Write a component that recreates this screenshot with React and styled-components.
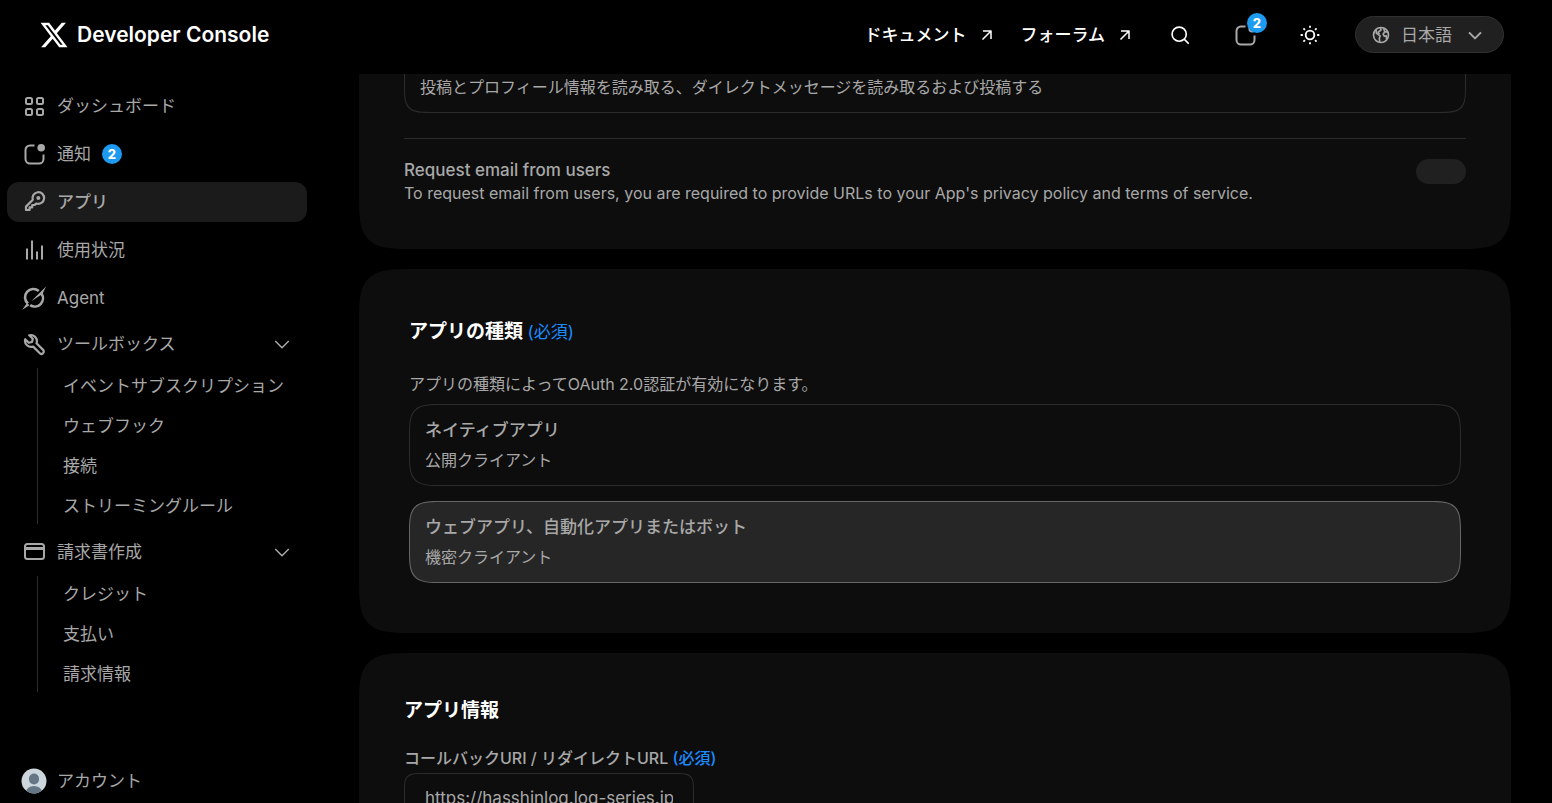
import React, { useState } from "react";
import styled, { createGlobalStyle } from "styled-components";

const navItems = [
  { id: "dashboard", label: "ダッシュボード" },
  { id: "notifications", label: "通知", count: 2 },
  { id: "apps", label: "アプリ" },
  { id: "usage", label: "使用状況" },
  { id: "agent", label: "Agent" },
];

const navGroups = [
  {
    id: "toolbox",
    label: "ツールボックス",
    items: ["イベントサブスクリプション", "ウェブフック", "接続", "ストリーミングルール"],
  },
  {
    id: "billing",
    label: "請求書作成",
    items: ["クレジット", "支払い", "請求情報"],
  },
];

const appTypes = [
  { id: "native", title: "ネイティブアプリ", text: "公開クライアント" },
  { id: "web", title: "ウェブアプリ、自動化アプリまたはボット", text: "機密クライアント" },
];

const Stroke = ({ size = 24, width = 2, children }) => (
  <svg
    width={size}
    height={size}
    viewBox="0 0 24 24"
    fill="none"
    stroke="currentColor"
    strokeWidth={width}
    strokeLinejoin="round"
    aria-hidden="true"
  >
    {children}
  </svg>
);

const NotificationIcon = ({ size }) => (
  <Stroke size={size}>
    <path d="M12.500 3.500H8A4.500 4.500 0 0 0 3.500 8v9A4.500 4.500 0 0 0 8 21.500h9a4.500 4.500 0 0 0 4.500-4.500v-4.500" />
    <circle cx="19.200" cy="5.800" r="3.800" fill="currentColor" stroke="none" />
  </Stroke>
);

const Chevron = ({ size = 18, width = 2 }) => (
  <Stroke size={size} width={width}>
    <path d="M3 8l9 9 9-9" />
  </Stroke>
);

const ArrowOut = () => (
  <Stroke size={12} width={3}>
    <path d="M4 4h16v16M20 4L3 21" />
  </Stroke>
);

const icons = {
  dashboard: (
    <Stroke>
      <rect x="4" y="4" width="6" height="6" rx="1.500" />
      <rect x="15" y="4" width="6" height="6" rx="1.500" />
      <rect x="4" y="15" width="6" height="6" rx="1.500" />
      <rect x="15" y="15" width="6" height="6" rx="1.500" />
    </Stroke>
  ),
  notifications: <NotificationIcon />,
  apps: (
    <Stroke width={2.2}>
      <path d="M10.800 9.800L4 16.600V20h3.600v-2.600h2.600v-2.400h2.300l2-1.500a5.800 5.800 0 1 0-3.700-3.700z" />
      <circle cx="16.300" cy="8" r="2" fill="currentColor" stroke="none" />
    </Stroke>
  ),
  usage: (
    <Stroke>
      <path d="M5 10.500v11M10 2.500v19M15 13.500v8M20 7.500v14" />
    </Stroke>
  ),
  agent: (
    <Stroke width={2.6}>
      <path d="M5.900 17.600A8.200 8.200 0 0 1 16.800 5" />
      <path d="M19.400 7.600A8.200 8.200 0 0 1 8.200 19.200" />
      <path d="M24 0.500L9.200 15.200 20.500 8zM5 17L7.500 19.200 0.200 23.800z" fill="currentColor" stroke="none" />
    </Stroke>
  ),
  toolbox: (
    <Stroke width={2.2}>
      <path d="M7.200 3.200l3.600 3.600-0.800 3.200-3.200 0.800-3.600-3.600a6.200 6.200 0 0 0 8 7.400l6.600 6.600a2.300 2.300 0 0 0 3.300-3.300L14.500 11.300A6.200 6.200 0 0 0 7.200 3.200z" />
    </Stroke>
  ),
  billing: (
    <Stroke>
      <rect x="3" y="4" width="19" height="15" rx="2.500" />
      <path d="M3 8.500h19" strokeWidth="3" />
    </Stroke>
  ),
};

const App = () => {
  const [appType, setAppType] = useState("web");
  const [callback, setCallback] = useState("https://hasshinlog.log-series.jp");

  return (
    <>
      <GlobalStyle />
      <Page>
        <Header>
          <Brand href="#">
            <svg width="30" height="30" viewBox="0 0 24 24" fill="currentColor" aria-hidden="true">
              <path d="M18.244 2.250h3.308l-7.227 8.260 8.502 11.240H16.170l-5.214-6.817L4.990 21.750H1.680l7.730-8.835L1.254 2.250H8.080l4.713 6.231zm-1.161 17.520h1.833L7.084 4.126H5.117z" />
            </svg>
            Developer Console
          </Brand>
          <HeaderActions>
            <HeaderLinks>
              <HeaderLink href="#docs">
                ドキュメント
                <ArrowOut />
              </HeaderLink>
              <HeaderLink href="#forum">
                フォーラム
                <ArrowOut />
              </HeaderLink>
            </HeaderLinks>
            <IconButton type="button" aria-label="検索">
              <Stroke size={20}>
                <circle cx="11" cy="11" r="8.500" />
                <path d="M17 17l5.500 5.500" />
              </Stroke>
            </IconButton>
            <IconButton type="button" aria-label="通知" $dim>
              <NotificationIcon size={24} />
              <CornerBadge>2</CornerBadge>
            </IconButton>
            <IconButton type="button" aria-label="テーマ">
              <Stroke size={22}>
                <circle cx="12" cy="12" r="4.700" />
                <path
                  d="M12 1.800v2.400M12 19.800v2.400M1.800 12h2.400M19.800 12h2.400M4.800 4.800l1.700 1.700M17.500 17.500l1.700 1.700M4.800 19.200l1.700-1.700M17.500 6.500l1.700-1.700"
                />
              </Stroke>
            </IconButton>
            <LanguageButton type="button">
              <Stroke size={20}>
                <circle cx="12" cy="12" r="9" />
                <path d="M6 5.500l0.500 4.500 4.500 3-1 3 0.500 4.500M11.500 3.500l0.500 2.500-3.500 2.500 1.500 2.500M20 8.500l-3.500-0.500-2 3 1.500 2.500 2.500-0.500 0 4.500M15 3.500l1.500 4.500" />
              </Stroke>
              <span>日本語</span>
              <Chevron size={16} width={3} />
            </LanguageButton>
          </HeaderActions>
        </Header>

        <Body>
          <Sidebar>
            <NavList>
              {navItems.map((item) => (
                <li key={item.id}>
                  <NavLink href={`#${item.id}`} $active={item.id === "apps"}>
                    {icons[item.id]}
                    {item.label}
                    {item.count && <Badge>{item.count}</Badge>}
                  </NavLink>
                </li>
              ))}
            </NavList>
            <Groups>
              {navGroups.map((group) => (
                <div key={group.id}>
                  <GroupButton type="button" aria-expanded="true">
                    {icons[group.id]}
                    <span>{group.label}</span>
                    <Chevron />
                  </GroupButton>
                  <SubList>
                    {group.items.map((label) => (
                      <li key={label}>
                        <SubLink href="#">{label}</SubLink>
                      </li>
                    ))}
                  </SubList>
                </div>
              ))}
            </Groups>
            <Account href="#account">
              <svg width="26" height="26" viewBox="0 0 26 26" aria-hidden="true">
                <clipPath id="avatar">
                  <circle cx="13" cy="13" r="12.500" />
                </clipPath>
                <g clipPath="url(#avatar)">
                  <rect width="26" height="26" fill="#ccd6dd" />
                  <rect x="8" y="5.500" width="10" height="11" rx="5" fill="#657786" />
                  <ellipse cx="13" cy="24" rx="8" ry="6" fill="#657786" />
                </g>
              </svg>
              アカウント
            </Account>
          </Sidebar>

          <Main>
            <Card $continued>
              <PermissionText>
                投稿とプロフィール情報を読み取る、ダイレクトメッセージを読み取るおよび投稿する
              </PermissionText>
              <Divider />
              <SwitchRow>
                <div>
                  <SwitchLabel htmlFor="request-email">Request email from users</SwitchLabel>
                  <Text>
                    To request email from users, you are required to provide URLs to your App's privacy policy and
                    terms of service.
                  </Text>
                </div>
                <Switch id="request-email" type="checkbox" role="switch" disabled />
              </SwitchRow>
            </Card>

            <Card $inset>
              <Title>
                アプリの種類 <Required>(必須)</Required>
              </Title>
              <Intro>アプリの種類によってOAuth 2.0認証が有効になります。</Intro>
              <Options>
                {appTypes.map((type) => (
                  <Option key={type.id} $selected={appType === type.id}>
                    <HiddenRadio
                      type="radio"
                      name="app-type"
                      checked={appType === type.id}
                      onChange={() => setAppType(type.id)}
                    />
                    <OptionTitle>{type.title}</OptionTitle>
                    <Text as="span">{type.text}</Text>
                  </Option>
                ))}
              </Options>
            </Card>

            <Card>
              <Title>アプリ情報</Title>
              <FieldLabel htmlFor="callback">
                コールバックURI / リダイレクトURL <em>(必須)</em>
              </FieldLabel>
              <Input id="callback" value={callback} onChange={(e) => setCallback(e.target.value)} />
            </Card>
          </Main>
        </Body>
      </Page>
    </>
  );
};

const GlobalStyle = createGlobalStyle`
  * {
    box-sizing: border-box;
    margin: 0;
    padding: 0;
  }

  body {
    background: #000;
    color: #a8a8a8;
    font-family: Inter, "Noto Sans CJK JP", sans-serif;
    font-size: 17px;
  }

  button, input {
    font: inherit;
    color: inherit;
    background: none;
    border: 0;
  }

  a {
    color: inherit;
    text-decoration: none;
  }

  ul {
    list-style: none;
  }

  svg {
    flex: none;
  }
`;

const Page = styled.div`
  display: flex;
  flex-direction: column;
  height: 100vh;
  overflow: hidden;
`;

const Header = styled.header`
  display: flex;
  align-items: center;
  justify-content: space-between;
  height: 74px;
  padding: 0 48px 5px 39px;
  flex: none;
  color: #fff;
`;

const Brand = styled.a`
  display: flex;
  align-items: center;
  gap: 8px;
  font-size: 21px;
  font-weight: 600;
`;

const HeaderActions = styled.div`
  display: flex;
  align-items: center;
  gap: 25px;
`;

const HeaderLinks = styled.nav`
  display: flex;
  gap: 28px;
  padding-right: 4px;
`;

const HeaderLink = styled.a`
  display: flex;
  align-items: center;
  gap: 14px;
  font-weight: 500;
  line-height: 24px;
`;

const IconButton = styled.button`
  position: relative;
  display: flex;
  align-items: center;
  justify-content: center;
  width: 40px;
  height: 40px;
  color: ${(props) => (props.$dim ? "#a8a8a8" : "#fff")};
`;

const Badge = styled.span`
  display: flex;
  align-items: center;
  justify-content: center;
  width: 20px;
  height: 20px;
  border-radius: 50%;
  background: #1d9bf0;
  color: #fff;
  font-size: 13px;
  font-weight: 800;
  line-height: 20px;
`;

const CornerBadge = styled(Badge)`
  position: absolute;
  top: -2px;
  right: -2px;
`;

const LanguageButton = styled.button`
  display: flex;
  align-items: center;
  gap: 10px;
  min-width: 149px;
  height: 37px;
  padding: 0 20px 0 15px;
  border: 1px solid #303030;
  border-radius: 19px;
  background: #202020;
  color: #a8a8a8;
  line-height: 24px;

  span {
    flex: 1;
    text-align: left;
  }
`;

const Body = styled.div`
  display: grid;
  grid-template-columns: 314px minmax(0, 1fr);
  flex: 1;
  min-height: 0;
`;

const Sidebar = styled.aside`
  display: flex;
  flex-direction: column;
  padding: 12px 7px 2px;
  min-height: 0;
`;

const NavList = styled.ul`
  display: flex;
  flex-direction: column;
  gap: 8px;
`;

const NavLink = styled.a`
  display: flex;
  align-items: center;
  gap: 11px;
  height: 40px;
  padding: 0 15px;
  border-radius: 12px;
  background: ${(props) => (props.$active ? "#1b1b1b" : "transparent")};
  font-weight: ${(props) => (props.$active ? 500 : 400)};
  line-height: 24px;
`;

const Groups = styled.div`
  display: flex;
  flex-direction: column;
  gap: 8px;
  margin-top: 6px;
`;

const GroupButton = styled.button`
  display: flex;
  align-items: center;
  gap: 11px;
  width: 100%;
  height: 40px;
  padding: 0 16px 0 15px;
  line-height: 24px;

  span {
    flex: 1;
    text-align: left;
  }
`;

const SubList = styled.ul`
  display: flex;
  flex-direction: column;
  gap: 4px;
  margin: 4px 0 0 30px;
  padding-left: 25px;
  border-left: 1px solid #2c2c2c;
`;

const SubLink = styled.a`
  display: flex;
  align-items: center;
  height: 36px;
  line-height: 24px;
`;

const Account = styled.a`
  display: flex;
  align-items: center;
  gap: 10px;
  height: 40px;
  margin-top: auto;
  padding: 0 14px;
  line-height: 24px;
`;

const Main = styled.main`
  display: flex;
  flex-direction: column;
  gap: 20px;
  padding: 0 41px 0 45px;
  overflow: hidden;
`;

const Card = styled.section`
  flex: none;
  padding: ${(props) => (props.$continued ? "0 45px 44px" : props.$inset ? "50px" : "45px")};
  border-radius: ${(props) => (props.$continued ? "0 0 60px 60px" : "60px")};
  corner-shape: squircle;
  background: #0d0d0d;
`;

const Text = styled.p`
  font-size: 16px;
  line-height: 24px;
`;

const PermissionText = styled(Text)`
  padding: 1px 15px 13px;
  border: 1px solid #2c2c2c;
  border-top: 0;
  border-radius: 0 0 30px 30px;
  corner-shape: squircle;
`;

const Divider = styled.hr`
  margin: 25px 0 20px;
  border: 0;
  border-top: 1px solid #2c2c2c;
`;

const SwitchRow = styled.div`
  display: flex;
  align-items: flex-start;
  justify-content: space-between;
`;

const SwitchLabel = styled.label`
  display: block;
  font-weight: 500;
  line-height: 22px;
`;

const Switch = styled.input`
  appearance: none;
  flex: none;
  width: 50px;
  height: 25px;
  border-radius: 13px;
  background: #202020;
`;

const Title = styled.h2`
  color: #fff;
  font-size: 19px;
  font-weight: 700;
  line-height: 26px;
`;

const Required = styled.span`
  color: #1a8cff;
  font-size: 17px;
  font-weight: 400;
`;

const Intro = styled(Text)`
  margin-top: 27px;
`;

const Options = styled.div`
  display: flex;
  flex-direction: column;
  gap: 15px;
  margin-top: 8px;
`;

const Option = styled.label`
  position: relative;
  display: flex;
  flex-direction: column;
  gap: 6px;
  padding: 13px 15px;
  border: 1px solid ${(props) => (props.$selected ? "#666" : "#2c2c2c")};
  border-radius: 36px;
  corner-shape: squircle;
  background: ${(props) => (props.$selected ? "#262626" : "transparent")};
  cursor: pointer;
`;

const HiddenRadio = styled.input`
  position: absolute;
  opacity: 0;
`;

const OptionTitle = styled.span`
  font-weight: 500;
  line-height: 24px;
`;

const FieldLabel = styled.label`
  display: block;
  margin-top: 22px;
  font-size: 16px;
  font-weight: 500;
  line-height: 24px;

  em {
    color: #1a8cff;
    font-style: normal;
  }
`;

const Input = styled.input`
  display: block;
  width: 290px;
  height: 50px;
  margin-top: 3px;
  padding: 0 20px;
  border: 1px solid #2c2c2c;
  border-radius: 20px;
  corner-shape: squircle;
`;

export default App;
